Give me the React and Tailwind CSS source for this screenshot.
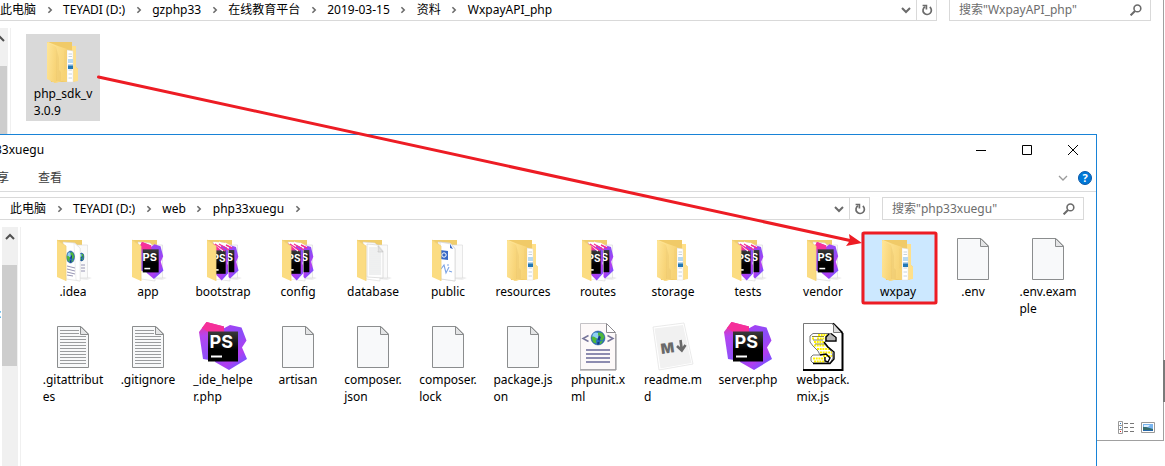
import React, { useId } from "react";

const YELLOW = "#fbdc82";

function Chevron({ className = "" }) {
  return (
    <svg viewBox="0 0 8 8" className={`size-2 ${className}`} fill="none" stroke="currentColor" strokeWidth="1.6" aria-hidden="true">
      <path d="M2.400 1.200 5.200 4 2.400 6.800" />
    </svg>
  );
}

function DownChevron({ className = "", width = 2 }) {
  return (
    <svg viewBox="0 0 12 12" className={`size-3 ${className}`} fill="none" stroke="currentColor" strokeWidth={width} aria-hidden="true">
      <path d="M2 4 6 8 10 4" />
    </svg>
  );
}

function RefreshIcon() {
  return (
    <svg viewBox="0 0 12 12" className="size-3" fill="none" stroke="#6b6b6b" strokeWidth="1.700" aria-hidden="true">
      <path d="M8.800 3A4.200 4.200 0 1 1 4 2.700" />
      <path d="M1.600 1.500H5.400V5.400" />
    </svg>
  );
}

function SearchIcon() {
  return (
    <svg viewBox="0 0 12 12" className="size-3" fill="none" stroke="#6b6b6b" strokeWidth="1.6" aria-hidden="true">
      <circle cx="7.4" cy="4.4" r="3.4" />
      <path d="M5 7 .6 11.4" strokeWidth="2" />
    </svg>
  );
}

function Icon({ children }) {
  return (
    <svg viewBox="0 0 48 48" className="size-12 shrink-0 overflow-visible" aria-hidden="true">
      {children}
    </svg>
  );
}

function PsShape() {
  const id = useId();
  return (
    <g>
      <defs>
        <linearGradient id={`${id}a`} x1=".3" y1="0" x2=".4" y2="1">
          <stop offset="0" stopColor="#f52f92" />
          <stop offset=".35" stopColor="#b545f0" />
          <stop offset="1" stopColor="#8a50fa" />
        </linearGradient>
        <linearGradient id={`${id}b`} x1="0" y1="0" x2=".6" y2="1">
          <stop offset="0" stopColor="#b43af0" />
          <stop offset=".5" stopColor="#8a4df8" />
          <stop offset=".8" stopColor="#b23df0" />
          <stop offset="1" stopColor="#7a50ff" />
        </linearGradient>
        <linearGradient id={`${id}c`} x1="0" y1="0" x2="0" y2="1">
          <stop offset="0" stopColor="#3a3a3a" />
          <stop offset=".6" stopColor="#000" />
        </linearGradient>
      </defs>
      <path d="M20 9 31 3 42.500 5.500 47.500 18.500 43 25.500 48 37 30 48 16 40Z" fill={`url(#${id}b)`} />
      <path d="M0 10 7.500 0 25 4.500 24 14 10 38 4 37Z" fill={`url(#${id}a)`} />
      <path d="M7.500 0 25 4.500 25 10H9L3 6Z" fill="#f5309a" />
      <rect x="9" y="9.500" width="30" height="30" fill={`url(#${id}c)`} />
      <rect x="12" y="33.500" width="11" height="2" fill="#fff" />
    </g>
  );
}

function PhpStormIcon() {
  return (
    <Icon>
      <PsShape />
      <text x="10.500" y="26" fontSize="18" fontWeight="700" fill="#fff" fontFamily="Inter, sans-serif">PS</text>
    </Icon>
  );
}

function FolderBack({ children }) {
  return (
    <Icon>
      <path d="M37 42 43 44 38 46 30 45Z" fill="#eee" />
      <path d="M8 6H33V42H10Z" fill="#f0cd6c" />
      {children}
      <path d="M8 6 17 12V47L8 43Z" fill={YELLOW} />
      <path d="M8 6 17 12V47" fill="none" stroke="#f3d27a" strokeWidth=".8" />
    </Icon>
  );
}

function Papers() {
  return (
    <g stroke="#d9d9d9" strokeWidth=".6">
      <path d="M25 11H38.500V44H25Z" fill="#fafafa" />
      <path d="M14 8 26 9 31 14V47L17 45Z" fill="#fff" />
    </g>
  );
}

function FullFolderIcon() {
  const id = useId();
  return (
    <Icon>
      <defs>
        <linearGradient id={id} x1="0" y1="0" x2="1" y2=".4">
          <stop offset="0" stopColor="#ffe698" />
          <stop offset="1" stopColor="#f7d376" />
        </linearGradient>
      </defs>
      <path d="M8 6H33V10H37V31L39 33V44L34 46H12Z" fill="#f0ca68" />
      <path d="M33 10H37V31L39 33V45L33 46Z" fill="#ffe08a" />
      <path d="M28 14 34 15V46H28Z" fill="#fff" stroke="#ddd" strokeWidth=".5" />
      <path d="M29.500 18H33M29.500 20.500H33M29.500 34H33M29.500 38H33M29.500 42H33" stroke="#c8d2da" />
      <path d="M29 23H34V27H29Z" fill="#b7d9f2" />
      <path d="M29 28.500H34V30H29Z" fill="#6fa9d6" />
      <path d="M29 30H34V33H29Z" fill="#2378b5" />
      <path d="M9 6 19 10 28 13V46L23 45 17 47 10 43Z" fill={`url(#${id})`} />
      <path d="M8 6 17 11 18 45 16 47 8 43Z" fill={`url(#${id})`} />
      <path d="M17 11 20 22V34L22 36V45H17Z" fill="#e9c468" opacity=".4" />
      <path d="M25 15V35L28 32V13Z" fill="#e9c468" opacity=".2" />
    </Icon>
  );
}

function PsFolderIcon() {
  return (
    <FolderBack>
      <Papers />
      <g transform="translate(14 8) scale(.53 .77)">
        <PsShape />
      </g>
      <text x="18.500" y="27" fontSize="11" fontWeight="700" fill="#fff" fontFamily="Inter, sans-serif">PS</text>
    </FolderBack>
  );
}

function PsMultiFolderIcon() {
  return (
    <FolderBack>
      <Papers />
      <svg x="29" y="8" width="12" height="38" viewBox="29 8 12 38">
        <g transform="translate(17 9) scale(.47 .74)">
          <PsShape />
        </g>
        <text x="27.500" y="27" fontSize="10" fontWeight="700" fill="#fff" fontFamily="Inter, sans-serif">S</text>
      </svg>
      <path d="M15 8 26 9 29.500 13V46L17 45Z" fill="#fff" />
      <svg x="14" y="8" width="15" height="40" viewBox="14 8 15 40">
        <g transform="translate(9.500 9) scale(.44 .78)">
          <PsShape />
        </g>
        <text x="13.500" y="28" fontSize="10" fontWeight="700" fill="#fff" fontFamily="Inter, sans-serif">PS</text>
      </svg>
      <path d="M15 9 24 17M20 8 30 14M26 9 33 13" stroke="#fff" strokeWidth="1.300" />
      <path d="M16 10 26 17M20 10 30 16M27 11 33 14" stroke="#f5308f" strokeWidth="1.400" />
    </FolderBack>
  );
}

function Globe({ cx, cy, rx, ry }) {
  return (
    <g>
      <ellipse cx={cx} cy={cy} rx={rx} ry={ry} fill="#2b6fc0" />
      <ellipse cx={cx - rx * 0.3} cy={cy - ry * 0.35} rx={rx * 0.5} ry={ry * 0.45} fill="#8fd0f2" />
      <path
        transform={`translate(${cx} ${cy}) scale(${rx} ${ry})`}
        d="M-.95-.1-.6-.2-.1.1-.3.4-.2.8-.7.65ZM0-.8.6-.75.95-.1.6.4.3.2.35-.2 0-.4ZM.3.5.7.4.5.8.2.9Z"
        fill="#4fb83a"
      />
      <path transform={`translate(${cx} ${cy}) scale(${rx} ${ry})`} d="M.1-.4.4-.1.2.4-.05.2ZM-.1.6.2.5.2.9-.1.95Z" fill="#123a86" />
      <ellipse cx={cx} cy={cy} rx={rx} ry={ry} fill="none" stroke="#1d4f8a" strokeWidth=".5" />
    </g>
  );
}

function WebFolderIcon() {
  return (
    <FolderBack>
      <Papers />
      <Globe cx={32.5} cy={23} rx={2.5} ry={4} />
      <path d="M25 9 31 14V47L27 46Z" fill="#fff" stroke="#ddd" strokeWidth=".5" />
      <Globe cx={21.5} cy={23} rx={4} ry={6} />
      <path d="M18 32 26 34M18 35 26 37M18 38 26 40M18 41 24 42M32 31H36M32 34H36M32 37H36" stroke="#8c8aac" strokeWidth=".9" />
    </FolderBack>
  );
}

function DatabaseFolderIcon() {
  return (
    <FolderBack>
      <Papers />
      <path d="M18 10 29 11 34 17V44L18 43Z" fill="#fdfdfd" stroke="#ccc" strokeWidth=".6" />
      <path d="M20 14H28M20 16H28M20 18H32M20 20H32M20 22H32M20 24H32M20 26H32M20 28H32M20 30H32M20 32H32M20 34H32M20 36H32M20 38H32M20 40H32" stroke="#dcdfe0" strokeWidth=".9" />
      <path d="M29 12V18H34Z" fill="#e3e3e3" stroke="#bbb" strokeWidth=".5" />
    </FolderBack>
  );
}

function PublicFolderIcon() {
  return (
    <FolderBack>
      <Papers />
      <path d="M16 8 27 10 31 15V47L17 45Z" fill="#fff" stroke="#ccc" strokeWidth=".6" />
      <path d="M16 16 24 17V26L16 25Z" fill="#3768c6" />
      <circle cx="20" cy="21" r="2.200" fill="none" stroke="#fff" />
      <path d="M26 10 29 15 26 14Z" fill="#3768c6" />
      <path d="M17 35 20 31 22 39 25 33M23 31H25M25 37 28 38" fill="none" stroke="#7ba3e6" strokeWidth="1.100" />
    </FolderBack>
  );
}

function FileIcon({ lined = false }) {
  return (
    <Icon>
      <path d="M8.500 4.500H32L39.500 12V45.500H8.500Z" fill="#f8f9fa" stroke="#8b8d8e" />
      <path d="M31.500 4.500V12.500H39.500Z" fill="#e4e5e6" stroke="#8b8d8e" />
      {lined && (
        <path
          d="M11 8.500H30M11 11.500H30M11 14.500H37M11 17.500H37M11 20.500H37M11 23.500H37M11 26.500H37M11 29.500H37M11 32.500H37M11 35.500H37M11 38.500H37M11 41.500H37"
          stroke="#9a9c9e"
        />
      )}
    </Icon>
  );
}

function XmlIcon() {
  return (
    <Icon>
      <path d="M6.500 1.500H32L41.500 11V47.500H6.500Z" fill="#fdf9f9" stroke="#c4c2c6" />
      <path d="M32.500 1.500V10.500H41.500Z" fill="#fff" stroke="#8d8b90" />
      <path d="M6 48H42V12" fill="none" stroke="#8c8a8e" />
      <Globe cx={24} cy={16} rx={7} ry={7} />
      <path d="M14.500 13.500 9 16.500 14.500 19.500M33.500 13.500 39 16.500 33.500 19.500" fill="none" stroke="#77759a" strokeWidth="1.500" />
      <path d="M12 28H36M12 32H36M12 36H36M12 40H36" stroke="#8e8cb0" strokeWidth="2" />
    </Icon>
  );
}

function MarkdownIcon() {
  return (
    <Icon>
      <path d="M4 5 35 1 44 42 10 48Z" fill="#fff" stroke="#e4e4e4" strokeWidth=".8" />
      <path d="M5.500 6.500 34 3 42.500 41 11.500 46.500Z" fill="#f1f1f1" />
      <text x="12.500" y="32" fontSize="14" fontWeight="900" fill="#6a6a6a" fontFamily="Inter, sans-serif" transform="rotate(-8 12 32)">M</text>
      <path d="M31.500 18 32.800 28M28 24 32.800 28.500 36.500 23" fill="none" stroke="#6a6a6a" strokeWidth="2.600" />
    </Icon>
  );
}

function ScriptIcon() {
  return (
    <Icon>
      <path d="M5 2H35L44 11V47.500H5Z" fill="#fff" />
      <path d="M4.500 48V1.500H35" fill="none" stroke="#777" />
      <path d="M34 1.500 43.500 11M4 48H43.500V11" fill="none" stroke="#000" strokeWidth="2" />
      <path d="M34.500 2V10.500H42" fill="#ddd" stroke="#777" />
      <path d="M14 11.500H32L27 14V19L25 21 28 25 33 30 34 36 31 41H14L12 39V35L14 33H21L19 29 14 24 11 20V14Z" fill="#fff" stroke="#777" />
      <path d="M19 13H28M13 16.500H15M18 16.500H26M15 20H25M15 23.500H26M18 27H30M21 30.500H33M24 34H33M14 36.500H26M15 39.500H26" stroke="#fff200" strokeWidth="2.200" strokeDasharray="2 .7" />
      <path d="M13 14.500H25M14 18H24M16 22H26" stroke="#6f6a10" strokeWidth=".8" />
      <path d="M27 14 32 12 36 16V18H30L27 19Z" fill="#b5b5b5" />
      <path d="M32 11.500 37 15.500V19H27V15L30 12M25 20 29 25 35 30V37L31 41.500H14M21 33 27 32 31 36 29 40 26 39V35" fill="none" stroke="#000" strokeWidth="1.400" />
    </Icon>
  );
}

const firstRow = [
  { lines: [".idea"], icon: WebFolderIcon },
  { lines: ["app"], icon: PsFolderIcon },
  { lines: ["bootstrap"], icon: PsMultiFolderIcon },
  { lines: ["config"], icon: PsMultiFolderIcon },
  { lines: ["database"], icon: DatabaseFolderIcon },
  { lines: ["public"], icon: PublicFolderIcon },
  { lines: ["resources"], icon: FullFolderIcon },
  { lines: ["routes"], icon: PsMultiFolderIcon },
  { lines: ["storage"], icon: FullFolderIcon },
  { lines: ["tests"], icon: PsMultiFolderIcon },
  { lines: ["vendor"], icon: PsFolderIcon },
  { lines: ["wxpay"], icon: FullFolderIcon, tone: "bg-[#cce8ff]" },
  { lines: [".env"], icon: FileIcon },
  { lines: [".env.exam", "ple"], icon: FileIcon },
];

const LinedFileIcon = () => <FileIcon lined />;

const secondRow = [
  { lines: [".gitattribut", "es"], icon: LinedFileIcon },
  { lines: [".gitignore"], icon: LinedFileIcon },
  { lines: ["_ide_helpe", "r.php"], icon: PhpStormIcon },
  { lines: ["artisan"], icon: FileIcon },
  { lines: ["composer.", "json"], icon: FileIcon },
  { lines: ["composer.", "lock"], icon: FileIcon },
  { lines: ["package.js", "on"], icon: FileIcon },
  { lines: ["phpunit.x", "ml"], icon: XmlIcon },
  { lines: ["readme.m", "d"], icon: MarkdownIcon },
  { lines: ["server.php"], icon: PhpStormIcon },
  { lines: ["webpack.", "mix.js"], icon: ScriptIcon },
];

function FileItem({ lines, icon: Glyph, tone = "" }) {
  return (
    <button type="button" className={`flex w-[74px] flex-col items-center pt-[2px] pb-[2px] text-black ${tone}`}>
      <Glyph />
      <span className="mt-px text-left leading-[17px] whitespace-nowrap">
        {lines.map((line, i) => (
          <React.Fragment key={i}>
            {i > 0 && <br />}
            {line}
          </React.Fragment>
        ))}
      </span>
    </button>
  );
}

function AddressRow({ crumbs, search, trailing = false, className = "" }) {
  return (
    <div className={`flex h-[23px] gap-3 ${className}`}>
      <div className="flex min-w-0 flex-1 border-y border-r border-[#d9d9d9]">
        <nav className="flex min-w-0 flex-1 items-center whitespace-nowrap" aria-label="路径">
          {crumbs.map((crumb, i) => (
            <React.Fragment key={crumb}>
              <button type="button" className="text-black">{crumb}</button>
              {(trailing || i < crumbs.length - 1) && (
                <span className="flex w-[27px] justify-center text-[#6b6b6b]">
                  <Chevron />
                </span>
              )}
            </React.Fragment>
          ))}
        </nav>
        <button type="button" aria-label="历史记录" className="flex w-5 items-center justify-center text-[#6b6b6b]">
          <DownChevron />
        </button>
        <button type="button" aria-label="刷新" className="flex w-5 items-center justify-center border-l border-[#d9d9d9]">
          <RefreshIcon />
        </button>
      </div>
      <label className="flex w-[202px] items-center border border-[#d9d9d9] pr-2 pl-[9px]">
        <input type="search" aria-label={search} placeholder={search} className="min-w-0 flex-1 bg-transparent outline-none placeholder:text-[#6d6d6d] placeholder:opacity-100" />
        <SearchIcon />
      </label>
    </div>
  );
}

function SourceWindow() {
  return (
    <section aria-label="WxpayAPI_php" className="absolute top-0 right-px bottom-[25px] left-0 flex flex-col border-r border-b border-[#a0a0a0] bg-white">
      <AddressRow
        className="-mt-[2px] pr-3"
        crumbs={["此电脑", "TEYADI (D:)", "gzphp33", "在线教育平台", "2019-03-15", "资料", "WxpayAPI_php"]}
        search={'搜索"WxpayAPI_php"'}
      />
      <div className="flex flex-1 pt-[7px]">
        <div className="w-[11px] border-r border-[#f0f0f0]">
          <div className="h-full w-2 overflow-hidden bg-[#f0f0f0] pt-[5px] pr-px">
            <DownChevron className="-ml-[6px] rotate-180 text-[#505050]" />
            <div className="mt-[21px] h-[100px] bg-[#cdcdcd]" />
          </div>
        </div>
        <div className="flex items-start pt-[6px] pl-[15px]">
          <FileItem lines={["php_sdk_v", "3.0.9"]} icon={FullFolderIcon} tone="bg-[#d9d9d9]" />
        </div>
      </div>
      <div className="flex items-center justify-end gap-[7px] pr-2 pb-[6px]">
        <button type="button" aria-label="详细信息">
          <svg viewBox="0 0 16 13" className="h-[13px] w-4" fill="none" aria-hidden="true">
            <path d="M.5.500H4.500V12.500H.500ZM.5 4.500H4.500M.5 8.500H4.500" stroke="#999" />
            <path d="M6 2.500H10M12 2.500H16M6 6.500H10M12 6.500H16M6 10.500H10M12 10.500H16" stroke="#777" />
            <path d="M2 2.500H3M2 6.500H3" stroke="#2878c8" />
            <path d="M2 10.500H3" stroke="#e02020" />
          </svg>
        </button>
        <button type="button" aria-label="大图标">
          <svg viewBox="0 0 14 11" className="h-[11px] w-[14px]" aria-hidden="true">
            <path d="M.5.500H13.500V10.500H.500Z" fill="#fff" stroke="#999" />
            <path d="M2 2H12V9H2Z" fill="#78b4ee" />
            <path d="M3 3H9L7 5H3Z" fill="#dceeff" />
            <path d="M2 5 5 5 12 7V9H2Z" fill="#356b6c" />
            <path d="M2 8H12V9H2Z" fill="#2668a8" />
          </svg>
        </button>
      </div>
    </section>
  );
}

function TargetWindow() {
  return (
    <section aria-label="php33xuegu" className="absolute top-[134px] right-[68px] bottom-0 left-0 flex flex-col overflow-hidden border-t border-r border-[#1883d7] bg-white">
      <header className="flex h-[29px] items-center justify-between">
        <h1 className="-ml-[5px] text-black">33xuegu</h1>
        <div className="flex h-full">
          <button type="button" aria-label="最小化" className="flex w-[46px] items-center justify-center">
            <svg viewBox="0 0 10 10" className="size-[10px]" stroke="#000"><path d="M0 5.500H10" /></svg>
          </button>
          <button type="button" aria-label="最大化" className="flex w-[46px] items-center justify-center">
            <svg viewBox="0 0 10 10" className="size-[10px]" fill="none" stroke="#000"><path d="M.5.500H9.500V9.500H.500Z" /></svg>
          </button>
          <button type="button" aria-label="关闭" className="flex w-[46px] items-center justify-center">
            <svg viewBox="0 0 10 10" className="size-[10px]" stroke="#000"><path d="M0 0 10 10M10 0 0 10" /></svg>
          </button>
        </div>
      </header>
      <div className="flex h-7 items-center justify-between border-b border-[#dadbdc] pr-1">
        <div className="flex gap-[29px] text-[#3c3c3c]">
          <button type="button" className="-ml-[3px]">享</button>
          <button type="button">查看</button>
        </div>
        <div className="flex items-center gap-[9px]">
          <button type="button" aria-label="展开功能区" className="text-[#9a9a9a]">
            <DownChevron width={1.3} />
          </button>
          <button type="button" aria-label="帮助" className="flex size-[14px] items-center justify-center rounded-full border border-[#0a58a8] bg-[#0078d7] text-[11px] leading-none font-bold text-white">?</button>
        </div>
      </div>
      <AddressRow
        className="mt-[5px] shrink-0 pr-3 [&_nav]:pl-[10px]"
        crumbs={["此电脑", "TEYADI (D:)", "web", "php33xuegu"]}
        search={'搜索"php33xuegu"'}
        trailing
      />
      <div className="mt-[7px] flex flex-1">
        <div className="flex w-[21px] border-r border-[#f0f0f0]">
          <div className="w-[2px] overflow-hidden pt-[79px]">
            <span className="-ml-[2px] text-black">:</span>
          </div>
          <div className="w-4 bg-[#f0f0f0] pt-1 pr-px">
            <DownChevron className="mx-auto rotate-180 text-[#505050]" />
            <div className="mt-[22px] h-[101px] bg-[#cdcdcd]" />
          </div>
        </div>
        <div className="grid flex-1 auto-rows-[88px] grid-cols-[repeat(auto-fill,74px)] content-start items-start gap-x-px pt-[5px] pl-[15px]">
          {[...firstRow, ...secondRow].map((item) => (
            <FileItem key={item.lines.join("")} {...item} />
          ))}
        </div>
      </div>
    </section>
  );
}

export default function App() {
  return (
    <main className="relative min-h-screen overflow-hidden bg-white font-['Noto_Sans','Noto_Sans_CJK_SC',sans-serif] text-[12px] leading-4">
      <SourceWindow />
      <TargetWindow />
      <div className="absolute right-0 bottom-[64px] h-[42px] w-[2px] bg-[#7a7a7a]" />
      <svg viewBox="0 0 1165 466" className="pointer-events-none absolute top-0 left-0 w-[1165px]" fill="none" aria-hidden="true">
        <path d="M98.500 77 850 240.500" stroke="#ed1c24" strokeWidth="3" strokeLinecap="round" />
        <path d="M862 243 849 234 850 240.500 846 246Z" fill="#ed1c24" />
        <rect x="863" y="233" width="73" height="70" rx="1" stroke="#ed1c24" strokeWidth="3" />
      </svg>
    </main>
  );
}
